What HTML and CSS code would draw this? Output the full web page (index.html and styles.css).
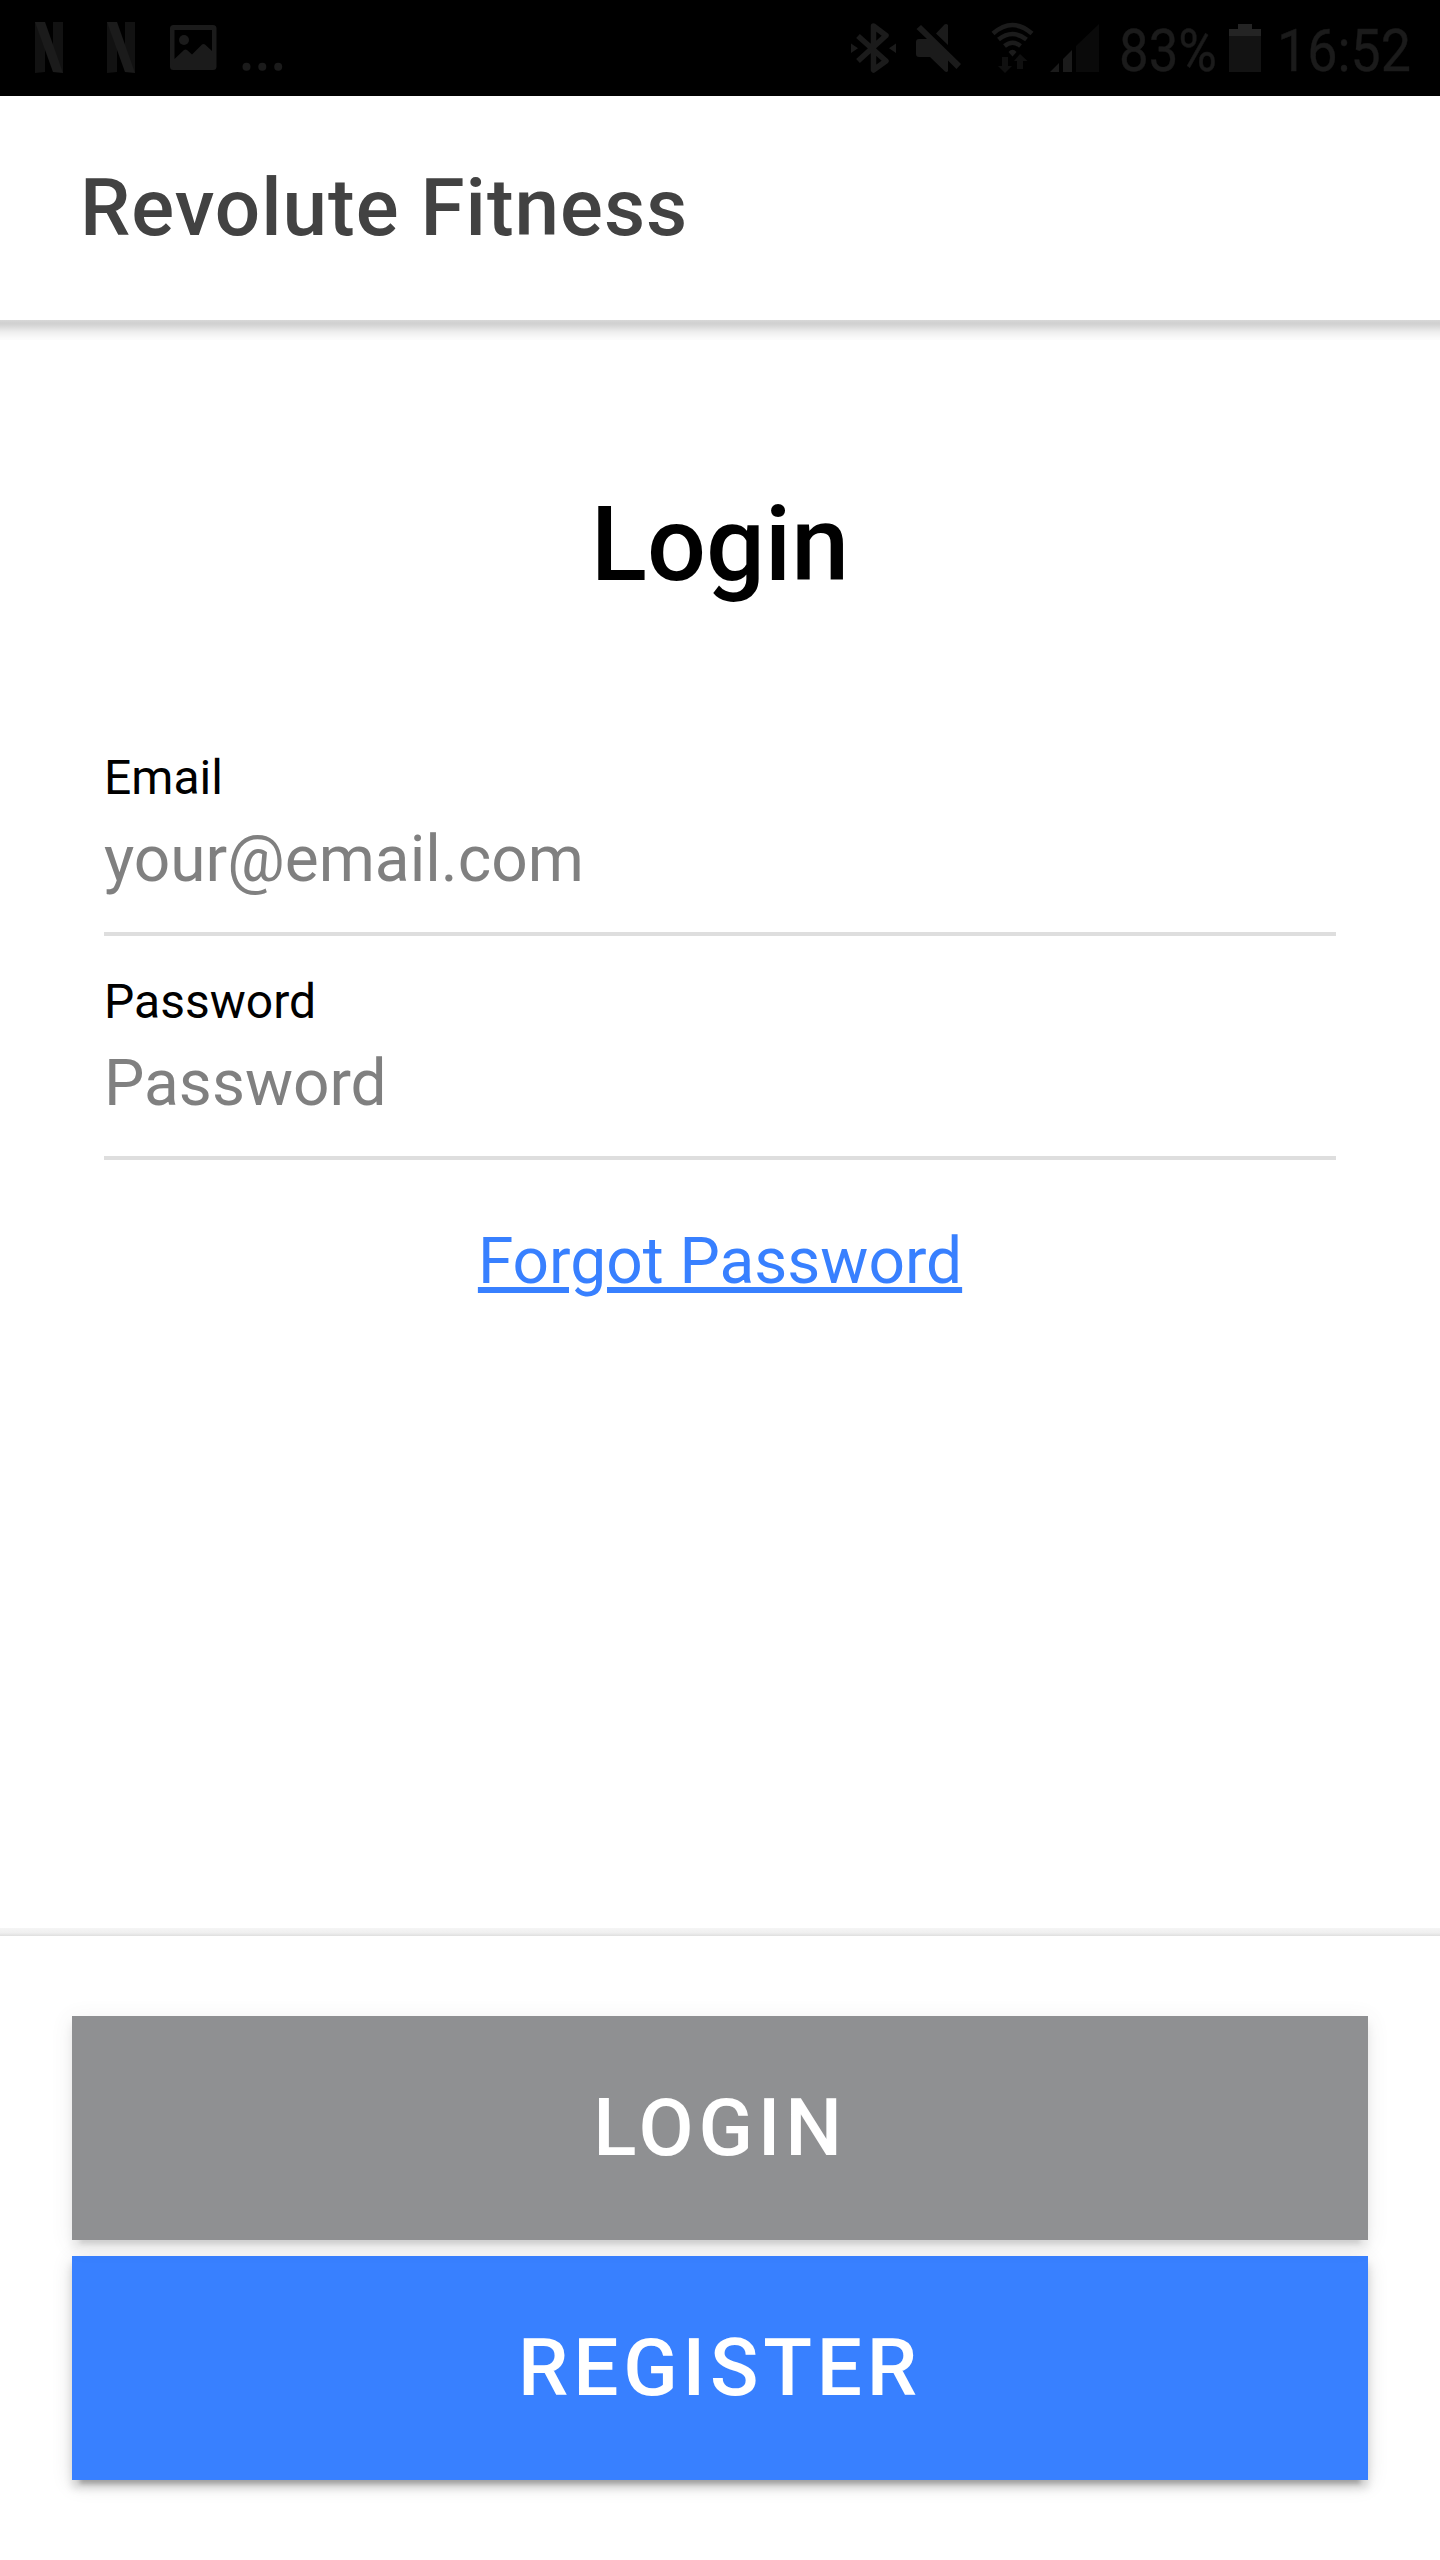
FILE: index.html
```html
<!DOCTYPE html>
<html lang="en">
<head>
<meta charset="utf-8">
<title>Revolute Fitness</title>
<link rel="stylesheet" href="styles.css">
</head>
<body>
<div class="app">
  <div class="status-bar">
    <div class="status-group">
      <svg width="72" height="96" viewBox="0 0 72 96"><path fill="#121212" d="M35 22h10v50l-10 1zM53 22h10v51l-10-6z"/><path fill="#1b1b1b" d="M35 22h10l18 51-10-1z"/></svg>
      <svg width="72" height="96" viewBox="0 0 72 96"><path fill="#121212" d="M35 22h10v50l-10 1zM53 22h10v51l-10-6z"/><path fill="#1b1b1b" d="M35 22h10l18 51-10-1z"/></svg>
      <svg width="86" height="96" viewBox="144 0 86 96"><path fill="#1b1b1b" fill-rule="evenodd" d="M173.500 25H213a3.500 3.500 0 0 1 3.500 3.500V66.500a3.500 3.500 0 0 1-3.500 3.500H173.500a3.500 3.500 0 0 1-3.500-3.500V28.500a3.500 3.500 0 0 1 3.500-3.500ZM174.500 30V59L184 50q1.500-1 3 0L192 54.500 202 44.500q1.500-1 3 0L212 51V30Z"/><circle cx="184" cy="40" r="5" fill="#1b1b1b"/></svg>
      <svg width="60" height="96" viewBox="230 0 60 96" fill="#1b1b1b"><circle cx="246.500" cy="66.800" r="4"/><circle cx="262.300" cy="66.800" r="4"/><circle cx="278.200" cy="66.800" r="4"/></svg>
    </div>
    <div class="status-group">
      <svg width="60" height="96" viewBox="844 0 60 96"><path d="M858 36l28 25-12.500 9V26L886 35.500 858 61" fill="none" stroke="#1b1b1b" stroke-width="5.500" stroke-linejoin="round"/><path fill="#1b1b1b" d="M851 43.500l7 4.700-7 4.700zM896 43.500l-7 4.700 7 4.700z"/></svg>
      <svg width="66" height="96" viewBox="904 0 66 96" fill="#1b1b1b"><path d="M921 25l40 39-4.500 5L948 60.500V71q-1 1.500-3 .5L930 57H919q-3 0-3-3V42q0-3 3-3h8L916.500 29zM936 33.500l8.500-9q2-1 3.500.5V45z"/></svg>
      <svg width="72" height="96" viewBox="970 0 72 96"><g fill="none" stroke="#1b1b1b" stroke-width="4.500"><path d="M993 33.500Q1012.500 16.500 1032 33.500"/><path d="M998.500 39.500Q1012.500 28.500 1026.500 39.500"/><path d="M1004.500 46Q1012.500 39.500 1020.500 46"/></g><path fill="#1b1b1b" d="M1008.500 52q4-4.500 8 0l-4 4.500z"/><path fill="#101010" d="M1002 57h6v9h4l-7 7-7-7h4zM1017 69h6v-8h4.500l-7.500-7-6 7h3z"/></svg>
      <svg width="70" height="96" viewBox="1042 0 70 96"><path fill="#1b1b1b" d="M1050 72l9-9v9zM1063 72V59l9-9v22z"/><path fill="#0a0a0a" d="M1076 72V46l23-22v48z"/></svg>
      <svg class="status-text" width="112" height="96" viewBox="1112 0 112 96"><text x="1119" y="71" textLength="98" lengthAdjust="spacingAndGlyphs">83%</text></svg>
      <svg width="46" height="96" viewBox="1224 0 46 96"><path fill="#242424" d="M1229 36v-7h9v-5h14v5h9v7z"/><path fill="#131313" d="M1229 36h32v36h-32z"/></svg>
      <svg class="status-text" width="170" height="96" viewBox="1270 0 170 96"><text x="1277" y="71" textLength="134" lengthAdjust="spacingAndGlyphs">16:52</text></svg>
    </div>
  </div>
  <header class="toolbar"><h1 class="toolbar-title">Revolute Fitness</h1></header>
  <main class="content">
    <h2 class="heading">Login</h2>
    <form class="form">
      <label class="field"><span class="field-label">Email</span><input class="field-input" type="email" placeholder="your@email.com"></label>
      <label class="field"><span class="field-label">Password</span><input class="field-input" type="password" placeholder="Password"></label>
    </form>
    <a class="forgot" href="#">Forgot Password</a>
  </main>
  <footer class="footer">
    <button class="button button-dark" type="button" disabled>LOGIN</button>
    <button class="button button-primary" type="button">REGISTER</button>
  </footer>
</div>
</body>
</html>
```
FILE: styles.css
```css
* { box-sizing: border-box; }
body { margin: 0; font-family: Roboto, "Liberation Sans", sans-serif; background: #fff; }
.app { display: flex; flex-direction: column; width: 1440px; height: 2560px; overflow: hidden; }
.status-bar { display: flex; justify-content: space-between; height: 96px; background: #000; }
.status-group { display: flex; }
.status-text { overflow: visible; font-size: 60px; fill: #1b1b1b; stroke: #1b1b1b; stroke-width: .4px; }
.toolbar { display: flex; align-items: center; height: 224px; padding: 0 80px; background: #fff; }
.toolbar-title { margin: 0; font-size: 80px; line-height: 96px; font-weight: 500; letter-spacing: 1px; color: #424242; }
.content {
  flex: 1; display: flex; flex-direction: column; align-items: center; padding: 161px 104px 0;
  background:
    linear-gradient(#d8d8d8, #d0d0d0 15%, #d4d4d4 25%, #eee 60%, #fafafa 90%, #fbfbfb) top / 100% 20px no-repeat,
    linear-gradient(#f5f5f5, #efefef 60%, #dfdfdf) bottom / 100% 8px no-repeat;
}
.heading { margin: 0; font-size: 104px; line-height: 128px; font-weight: 500; color: #000; }
.form { width: 100%; padding-top: 127px; }
.field { display: flex; flex-direction: column; height: 224px; border-bottom: 4px solid #dedede; }
.field:first-child { height: 200px; padding-top: 13px; }
.field:last-child { padding-top: 37px; }
.field-label { font-size: 48px; line-height: 58px; color: #000; }
.field-input { width: 100%; height: 80px; margin: 13px 0 0; padding: 0; border: 0; outline: 0; background: transparent; font: 400 64px/80px Roboto, "Liberation Sans", sans-serif; }
.field-input::placeholder { color: #808080; opacity: 1; }
.forgot { margin-top: 62px; font-size: 64px; line-height: 80px; color: #3880ff; text-decoration: underline; }
.footer { display: flex; flex-direction: column; gap: 16px; height: 624px; padding: 80px 72px; }
.button {
  height: 224px; flex: none; border: 0; padding: 0; color: #fff;
  font: 500 80px/96px Roboto, "Liberation Sans", sans-serif; letter-spacing: 4.8px;
  box-shadow: 0 12px 4px -8px rgba(0,0,0,.2), 0 8px 8px rgba(0,0,0,.14), 0 4px 20px rgba(0,0,0,.12);
}
.button-dark { background: #222428; opacity: .5; }
.button-primary { background: #3880ff; }
```
